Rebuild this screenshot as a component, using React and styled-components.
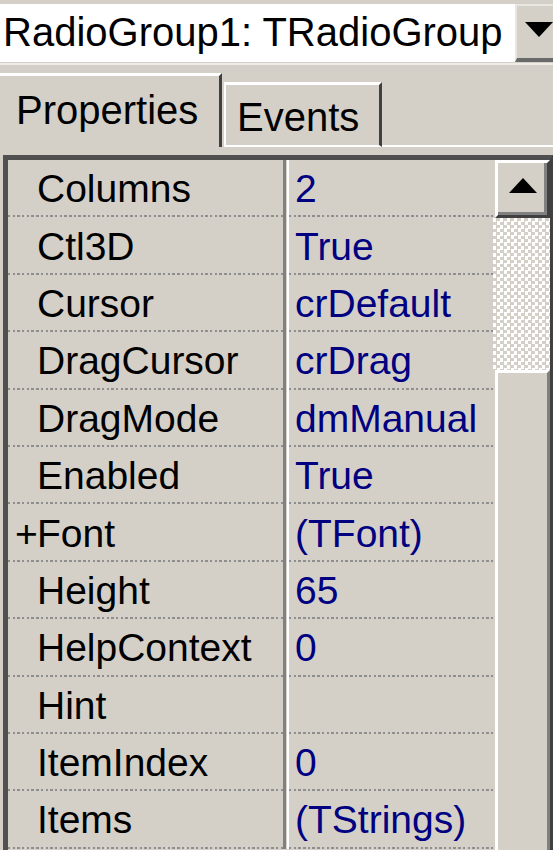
import React from 'react';
import styled, { createGlobalStyle } from 'styled-components';

const GlobalStyle = createGlobalStyle`
    html, body {
        margin: 0;
        padding: 0;
        background: #d4d0c8;
        overflow: hidden;
    }
    * {
        box-sizing: border-box;
    }
`;

const Window = styled.div`
    width: 553px;
    height: 850px;
    overflow: hidden;
    background: #d4d0c8;
    font-family: "Liberation Sans", Arial, sans-serif;
    color: #000;
    padding-top: 4px;
`;

const Combo = styled.div`
    display: flex;
    height: 58px;
    background: #fff;
`;

const ComboText = styled.div`
    flex: 1;
    padding-left: 3px;
    font-size: 40px;
    line-height: 56px;
    white-space: nowrap;
`;

const ComboButton = styled.div`
    width: 38px;
    display: flex;
    align-items: center;
    justify-content: flex-end;
    background: #d4d0c8;
    border-top: 2px solid #e8e6e0;
    border-left: 2px solid #e8e6e0;
    border-bottom: 4px solid #6a6a6a;
    padding-bottom: 4px;
`;

const TabStrip = styled.div`
    display: flex;
    align-items: flex-end;
    height: 84px;
    margin-top: 1px;
    border-top: 2px solid #eeece6;
`;

const Tab = styled.div`
    height: ${({ active }) => (active ? '74px' : '65px')};
    width: ${({ width }) => width}px;
    margin-left: ${({ active }) => (active ? '0' : '2px')};
    padding-left: ${({ pad }) => pad}px;
    padding-top: ${({ active }) => (active ? '14px' : '12px')};
    font-size: 40px;
    line-height: 40px;
    border-top: 3px solid #fff;
    border-left: ${({ active }) => (active ? 'none' : '2px solid #fff')};
    border-right: 3px solid #404040;
    border-bottom: ${({ active }) => (active ? 'none' : '2px solid #fff')};
    white-space: nowrap;
`;

const TabFiller = styled.div`
    flex: 1;
    border-bottom: 2px solid #fff;
`;

const Frame = styled.div`
    margin-top: 8px;
    margin-left: 3px;
    height: 700px;
    display: flex;
    border-top: 5px solid #505050;
    border-left: 5px solid #505050;
    border-right: 3px solid #404040;
    box-shadow: inset 0 0 0 0 transparent;
`;

const Grid = styled.div`
    width: 485px;
    display: flex;
    flex-direction: column;
`;

const Row = styled.div`
    display: grid;
    grid-template-columns: 275px 6px 204px;
    height: 57.4px;
    flex-shrink: 0;
`;

const Cell = styled.div`
    position: relative;
    display: flex;
    align-items: center;
    padding-left: ${({ value }) => (value ? '6px' : '7px')};
    font-size: 39px;
    line-height: 55px;
    white-space: nowrap;
    overflow: hidden;
    color: ${({ value }) => (value ? '#000080' : '#000')};

    &::after {
        content: '';
        position: absolute;
        left: 0;
        right: 0;
        bottom: 0;
        height: 2px;
        background: repeating-linear-gradient(90deg, #8e8e8e 0 2.4px, transparent 2.4px 4.7px);
    }
`;

const Marker = styled.span`
    display: inline-block;
    width: 22px;
    flex-shrink: 0;
`;

const Divider = styled.div`
    background: linear-gradient(90deg, #808080 0 3px, #d4d0c8 3px 4px, #fff 4px 6px);
`;

const ScrollBar = styled.div`
    width: 57px;
    display: flex;
    flex-direction: column;
    padding-left: 2px;
`;

const ArrowButton = styled.div`
    height: 58px;
    flex-shrink: 0;
    display: flex;
    align-items: center;
    justify-content: center;
    background: #d4d0c8;
    border-top: 3px solid #fff;
    border-left: 3px solid #fff;
    border-right: 3px solid #404040;
    border-bottom: 3px solid #404040;
    box-shadow: inset -3px -3px 0 #808080;
    padding-bottom: 6px;
`;

const Track = styled.div`
    height: 152px;
    flex-shrink: 0;
    background-color: #fff;
    background-image: repeating-conic-gradient(#d4d0c8 0 25%, #fff 0 50%);
    background-size: 7px 7px;
    margin-left: -2px;
`;

const Thumb = styled.div`
    flex: 1;
    background: #d4d0c8;
    border-top: 3px solid #fff;
    border-left: 3px solid #fff;
    border-right: 3px solid #808080;
`;

const properties = [
    { name: 'Columns', value: '2' },
    { name: 'Ctl3D', value: 'True' },
    { name: 'Cursor', value: 'crDefault' },
    { name: 'DragCursor', value: 'crDrag' },
    { name: 'DragMode', value: 'dmManual' },
    { name: 'Enabled', value: 'True' },
    { name: 'Font', value: '(TFont)', expandable: true },
    { name: 'Height', value: '65' },
    { name: 'HelpContext', value: '0' },
    { name: 'Hint', value: '' },
    { name: 'ItemIndex', value: '0' },
    { name: 'Items', value: '(TStrings)' },
];

const App = () => (
    <>
        <GlobalStyle />
        <Window>
            <Combo>
                <ComboText>RadioGroup1: TRadioGroup</ComboText>
                <ComboButton>
                    <svg width="28" height="16" viewBox="0 0 28 16">
                        <polygon points="0,0 28,0 14,15" fill="#000" />
                    </svg>
                </ComboButton>
            </Combo>
            <TabStrip>
                <Tab active width={222} pad={16}>Properties</Tab>
                <Tab width={158} pad={11}>Events</Tab>
                <TabFiller />
            </TabStrip>
            <Frame>
                <Grid>
                    {properties.map(prop => (
                        <Row key={prop.name}>
                            <Cell>
                                <Marker>{prop.expandable ? '+' : ''}</Marker>
                                {prop.name}
                            </Cell>
                            <Divider />
                            <Cell value>{prop.value}</Cell>
                        </Row>
                    ))}
                </Grid>
                <ScrollBar>
                    <ArrowButton>
                        <svg width="28" height="16" viewBox="0 0 28 16">
                            <polygon points="14,0 28,15 0,15" fill="#000" />
                        </svg>
                    </ArrowButton>
                    <Track />
                    <Thumb />
                </ScrollBar>
            </Frame>
        </Window>
    </>
);

export default App;
